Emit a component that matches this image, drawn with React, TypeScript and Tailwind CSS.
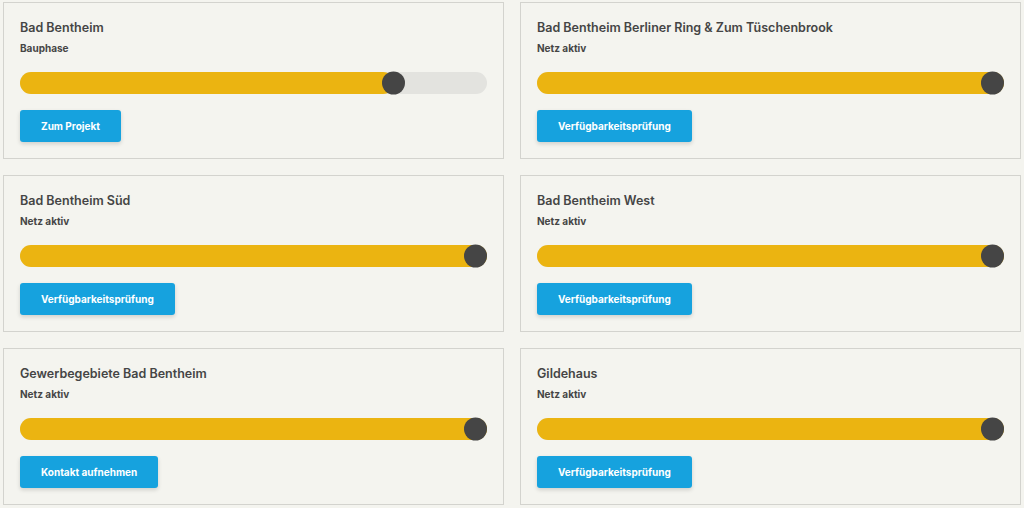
import React from "react";

type Item = { title: string; status: string; pct: number; button: string };

const items: Item[] = [
  { title: "Bad Bentheim", status: "Bauphase", pct: 80, button: "Zum Projekt" },
  { title: "Bad Bentheim Berliner Ring & Zum Tüschenbrook", status: "Netz aktiv", pct: 100, button: "Verfügbarkeitsprüfung" },
  { title: "Bad Bentheim Süd", status: "Netz aktiv", pct: 100, button: "Verfügbarkeitsprüfung" },
  { title: "Bad Bentheim West", status: "Netz aktiv", pct: 100, button: "Verfügbarkeitsprüfung" },
  { title: "Gewerbegebiete Bad Bentheim", status: "Netz aktiv", pct: 100, button: "Kontakt aufnehmen" },
  { title: "Gildehaus", status: "Netz aktiv", pct: 100, button: "Verfügbarkeitsprüfung" },
];

function Bar({ pct }: { pct: number }) {
  const full = pct >= 100;
  return (
    <div className="relative h-[22px] w-full rounded-full bg-[#e3e3df]">
      <div
        className="h-full rounded-full bg-[#ebb411]"
        style={{ width: full ? "100%" : `${pct}%` }}
      />
      <div
        className="absolute top-1/2 h-[23px] w-[23px] -translate-y-1/2 rounded-full bg-[#454545]"
        style={full ? { right: 0 } : { left: `calc(${pct}% - 11.5px)` }}
      />
    </div>
  );
}

function Card({ item }: { item: Item }) {
  return (
    <div className="h-[157px] border border-[#d3d3ce] bg-[#f4f4ef] px-4 pt-[16px]">
      <div className="text-[12.5px] font-semibold leading-[18px] text-[#454545]">{item.title}</div>
      <div className="mt-[4px] text-[10px] font-bold leading-[14px] text-[#454545]">{item.status}</div>
      <div className="mt-[17px]">
        <Bar pct={item.pct} />
      </div>
      <button className="mt-4 h-[32px] rounded-[3px] bg-[#16a2de] px-[21px] text-[10px] font-bold text-white shadow-[0_2px_4px_rgba(0,0,0,0.15)]">
        {item.button}
      </button>
    </div>
  );
}

export default function App() {
  return (
    <div
      className="h-[508px] w-[1024px] overflow-hidden bg-[#f4f4ef] px-[3px] pt-[2px]"
      style={{ fontFamily: "Inter, 'Noto Sans', sans-serif" }}
    >
      <div className="grid grid-cols-2 gap-x-4 gap-y-[16px]">
        {items.map((it) => (
          <Card key={it.title} item={it} />
        ))}
      </div>
    </div>
  );
}
